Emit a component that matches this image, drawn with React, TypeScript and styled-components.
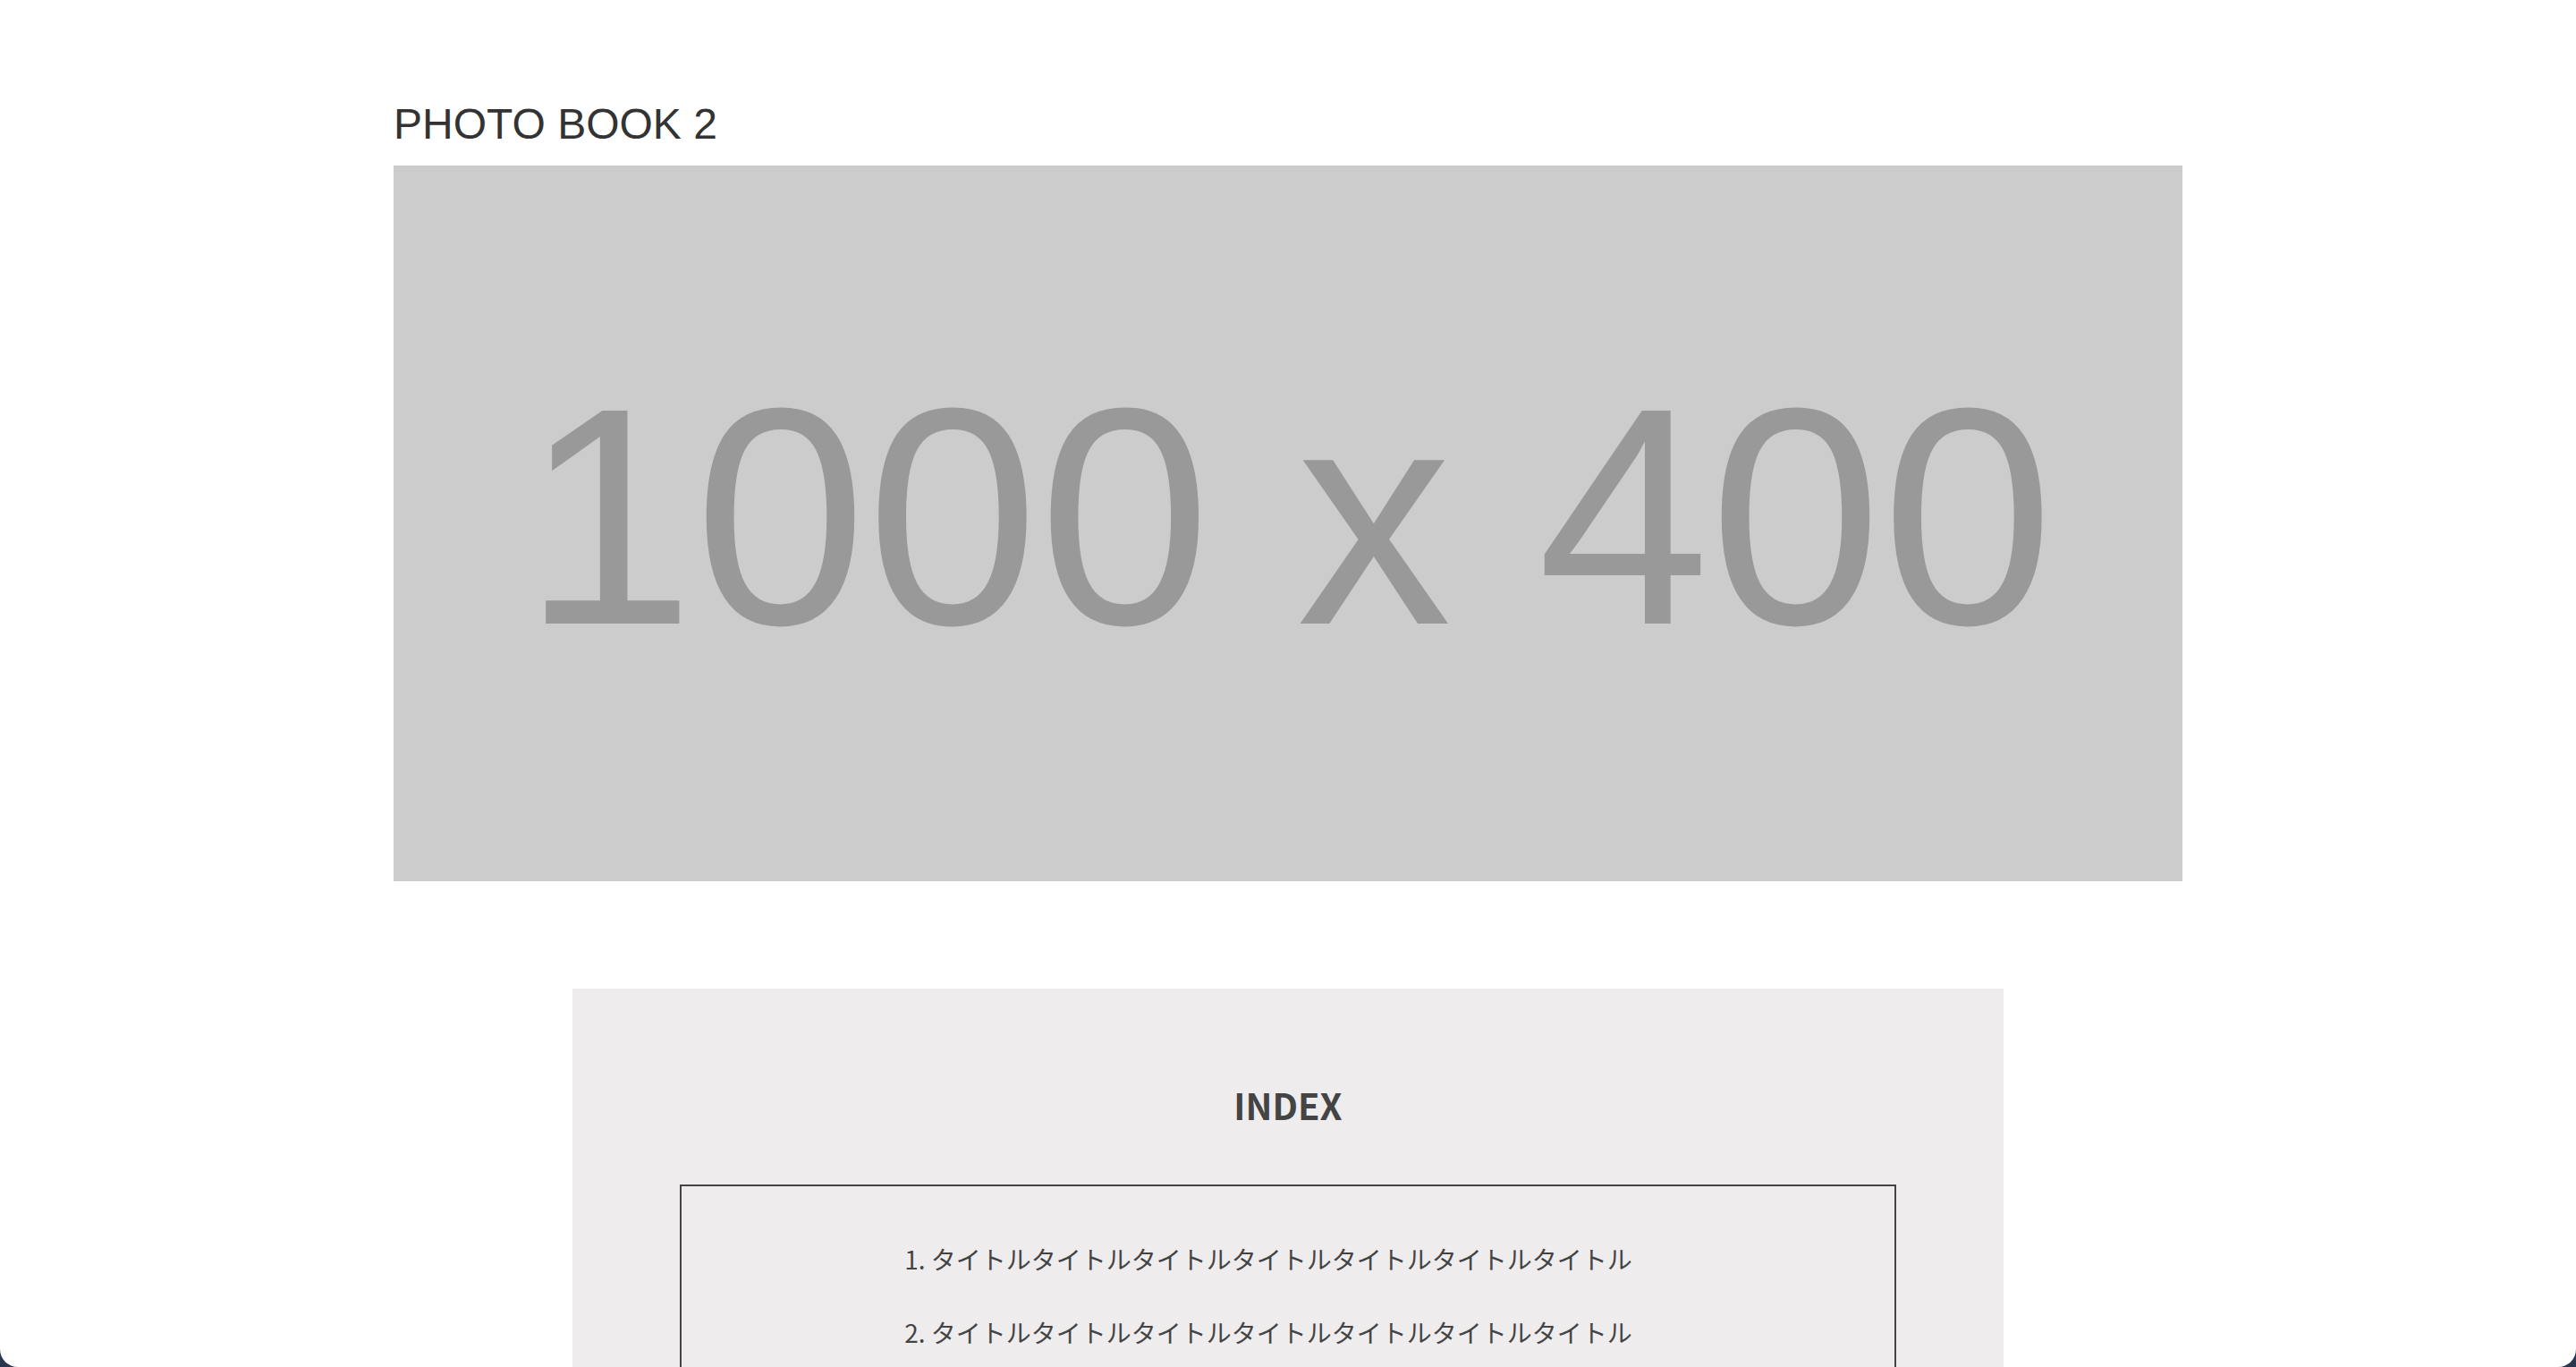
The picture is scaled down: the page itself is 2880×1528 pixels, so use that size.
import React from 'react';
import styled, { createGlobalStyle } from 'styled-components';

const GlobalStyle = createGlobalStyle`
  html, body {
    margin: 0;
    padding: 0;
    background: #2a3550;
  }
  * {
    box-sizing: border-box;
  }
`;

const Frame = styled.div`
  height: 100vh;
  overflow: hidden;
  background: #fff;
  border-radius: 0 0 20px 20px;
`;

const Main = styled.main`
  width: 2000px;
  margin: 0 auto;
  padding-top: 111px;
`;

const Title = styled.h2`
  margin: 0 0 19px;
  font-family: 'Liberation Sans', Arial, sans-serif;
  font-size: 48px;
  font-weight: 400;
  line-height: 1.15;
  color: #333;
`;

const Placeholder = styled.div`
  display: flex;
  align-items: center;
  justify-content: center;
  width: 2000px;
  height: 800px;
  background: #cccccc;
  color: #999999;
  font-family: 'Liberation Sans', Arial, sans-serif;
  font-size: 346px;
  line-height: 1;
  padding-bottom: 16px;
`;

const IndexBox = styled.section`
  width: 1600px;
  margin: 120px auto 0;
  padding: 101px 120px 120px;
  background: #eeeced;
  font-family: 'Noto Sans CJK JP', 'Noto Sans', sans-serif;
  color: #444;
`;

const IndexTitle = styled.h3`
  margin: 0 0 60px;
  text-align: center;
  font-size: 40px;
  font-weight: 700;
  line-height: 58px;
`;

const ListFrame = styled.div`
  border: 2px solid #444;
  padding: 40px 44px 40px 0;
`;

const List = styled.ol`
  margin: 0;
  padding: 0;
  list-style: none;
  text-align: center;
`;

const Item = styled.li`
  font-size: 28px;
  line-height: 82px;
`;

const titles = Array.from({ length: 2 }, () => 'タイトル'.repeat(7));

const App = () => {
  return (
    <Frame>
      <GlobalStyle />
      <Main>
        <Title>PHOTO BOOK 2</Title>
        <Placeholder>1000 x 400</Placeholder>
        <IndexBox>
          <IndexTitle>INDEX</IndexTitle>
          <ListFrame>
            <List>
              {titles.map((t, i) => (
                <Item key={i}>
                  {i + 1}. {t}
                </Item>
              ))}
            </List>
          </ListFrame>
        </IndexBox>
      </Main>
    </Frame>
  );
};

export default App;
